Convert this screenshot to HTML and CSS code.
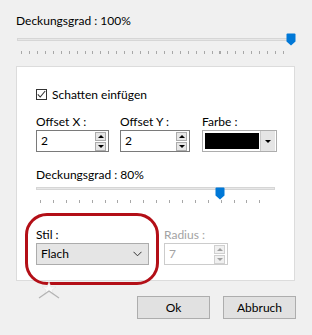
FILE: index.html
```html
<!DOCTYPE html>
<html>
<head>
<meta charset="utf-8">
<link rel="stylesheet" href="styles.css">
</head>
<body>
<div class="dialog">
  <div class="label top-label">Deckungsgrad : 100%</div>
  <div class="slider slider-top">
    <div class="track"></div>
    <div class="ticks ticks-top"></div>
    <svg class="thumb thumb-top" width="10" height="13" viewBox="0 0 10 13"><path d="M0.5 1.5 Q0.5 0.5 1.5 0.5 H8.5 Q9.5 0.5 9.5 1.5 V8.5 L5 12.5 L0.5 8.5 Z" fill="#0078d7"/></svg>
  </div>

  <div class="panel">
    <label class="check-row">
      <span class="checkbox"><svg width="11" height="11" viewBox="0 0 11 11"><path d="M1.8 5.4 L4.2 8 L9.2 2" fill="none" stroke="#333" stroke-width="1.1"/></svg></span>
      <span>Schatten einfügen</span>
    </label>

    <div class="fields">
      <div class="field f-x">
        <div class="label">Offset X :</div>
        <div class="spin">
          <span class="val">2</span>
          <span class="spin-btns"><span class="sb up"></span><span class="sb down"></span></span>
        </div>
      </div>
      <div class="field f-y">
        <div class="label">Offset Y :</div>
        <div class="spin">
          <span class="val">2</span>
          <span class="spin-btns"><span class="sb up"></span><span class="sb down"></span></span>
        </div>
      </div>
      <div class="field f-c">
        <div class="label">Farbe :</div>
        <div class="color-combo">
          <span class="swatch"></span>
          <span class="drop"><span class="tri"></span></span>
        </div>
      </div>
    </div>

    <div class="label op-label">Deckungsgrad : 80%</div>
    <div class="slider slider-inner">
      <div class="track"></div>
      <div class="ticks ticks-inner"></div>
      <svg class="thumb thumb-inner" width="10" height="13" viewBox="0 0 10 13"><path d="M0.5 1.5 Q0.5 0.5 1.5 0.5 H8.5 Q9.5 0.5 9.5 1.5 V8.5 L5 12.5 L0.5 8.5 Z" fill="#0078d7"/></svg>
    </div>

    <div class="bottom-row">
      <div class="field f-stil">
        <div class="label">Stil :</div>
        <div class="select">
          <span class="val">Flach</span>
          <svg class="chev" width="9" height="6" viewBox="0 0 9 6"><path d="M0.5 0.8 L4.5 4.8 L8.5 0.8" fill="none" stroke="#333" stroke-width="1"/></svg>
        </div>
      </div>
      <div class="field f-rad">
        <div class="label disabled">Radius :</div>
        <div class="spin spin-disabled">
          <span class="val">7</span>
          <span class="spin-btns"><span class="sb up"></span><span class="sb down"></span></span>
        </div>
      </div>
    </div>
    <div class="highlight"></div>
  </div>

  <div class="footer">
    <svg class="mark" width="30" height="20" viewBox="0 0 30 20"><path d="M11 1 L13 6 L18 6 L14 9 L15.5 14 L11 11 L6.5 14 L8 9 L4 6 L9 6 Z" fill="#fafafa" stroke="#e2e2e2" stroke-width="0.6"/><path d="M1 17 L11 10 L21 17" fill="none" stroke="#b4b4b4" stroke-width="1.3"/></svg>
    <div class="buttons">
      <button class="btn">Ok</button>
      <button class="btn">Abbruch</button>
    </div>
  </div>
</div>
</body>
</html>
```

FILE: styles.css
```css
* { box-sizing: border-box; }
html, body { margin: 0; padding: 0; }
body {
  background: #f0f0f0;
  font-family: Lato, "Noto Sans", sans-serif;
  font-size: 12px;
  color: #000;
  width: 312px;
  height: 335px;
  overflow: hidden;
}
.dialog { display: flex; flex-direction: column; }
.label { line-height: 14px; height: 14px; white-space: nowrap; }
.label.disabled { color: #a3a3a3; }
.top-label { margin: 14px 0 0 16px; }

.slider { position: relative; }
.track {
  height: 3px;
  background: #e7e7e7;
  border: 1px solid #d6d6d6;
  margin-top: 5px;
}
.ticks {
  height: 3px;
  margin-top: 10px;
}
.ticks-top {
  margin-left: 4px;
  margin-right: 4px;
  background: repeating-linear-gradient(to right, #a8a8a8 0, #a8a8a8 1px, transparent 1px, transparent 7.94px);
}
.ticks-inner {
  margin-left: 4px;
  margin-right: 4px;
  background: repeating-linear-gradient(to right, #a8a8a8 0, #a8a8a8 1px, transparent 1px, transparent 12.9px);
}
.thumb { position: absolute; top: 0; }
.slider-top { margin: 5px 0 0 17px; width: 278px; height: 21px; }
.thumb-top { left: 269px; }

.panel {
  position: relative;
  margin: 12px 0 0 16px;
  width: 279px;
  height: 215px;
  background: #fff;
  border: 1px solid #dcdcdc;
  padding: 19px 0 0 19px;
}
.check-row { display: flex; align-items: center; height: 16px; gap: 5px; }
.checkbox {
  width: 11px; height: 11px;
  border: 1px solid #333;
  display: flex;
  margin-left: 0;
}
.checkbox svg { margin: -1px; }

.fields { display: flex; margin-top: 13px; gap: 11px; }
.field { display: flex; flex-direction: column; }
.field .label { height: 15px; }
.f-x { width: 73px; }
.f-y { width: 70px; }
.f-c { width: 75px; margin-left: 1px; }

.spin {
  height: 22px;
  border: 1px solid #7a7a7a;
  background: #fff;
  display: flex;
  align-items: center;
  justify-content: space-between;
  padding: 0 2px 0 4px;
}
.spin .val { line-height: 16px; }
.spin-btns { display: flex; flex-direction: column; gap: 1px; }
.sb {
  width: 11px; height: 9px;
  border: 1px solid #acacac;
  background: #e6e6e6;
  position: relative;
}
.sb::after {
  content: "";
  position: absolute;
  left: 2px;
  width: 0; height: 0;
  border-left: 3px solid transparent;
  border-right: 3px solid transparent;
}
.sb.up::after { top: 2px; border-bottom: 3px solid #000; }
.sb.down::after { top: 2px; border-top: 3px solid #000; }
.spin-disabled { border-color: #cccccc; }
.spin-disabled .val { color: #a3a3a3; }
.spin-disabled .sb { border-color: #d0d0d0; background: #f0f0f0; }
.spin-disabled .sb.up::after { border-bottom-color: #a0a0a0; }
.spin-disabled .sb.down::after { border-top-color: #a0a0a0; }

.color-combo {
  height: 22px;
  border: 1px solid #adadad;
  background: #fff;
  display: flex;
  padding: 2px 1px 2px 2px;
  gap: 1px;
}
.swatch { flex: 1; background: #000; }
.drop {
  width: 15px;
  background: #e5e5e5;
  border-left: 1px solid #c8c8c8;
  display: flex;
  align-items: center;
  justify-content: center;
  margin: -2px 0;
}
.tri {
  width: 0; height: 0;
  border-left: 3px solid transparent;
  border-right: 3px solid transparent;
  border-top: 3px solid #000;
}

.op-label { margin-top: 16px; }
.slider-inner { margin-top: 1px; width: 239px; height: 21px; }
.thumb-inner { left: 179px; }

.bottom-row { display: flex; margin-top: 20px; gap: 15px; }
.f-stil { width: 113px; }
.f-rad { width: 64px; }
.select {
  height: 22px;
  background: #e5e5e5;
  border: 1px solid #acacac;
  display: flex;
  align-items: center;
  justify-content: space-between;
  padding: 0 6px 0 4px;
}
.select .val { line-height: 16px; }
.chev { display: block; }

.highlight {
  position: absolute;
  left: 8px;
  top: 146px;
  width: 134px;
  height: 72px;
  border: 3px solid #b30f17;
  border-radius: 22px;
  pointer-events: none;
}

.footer { position: relative; height: 54px; }
.mark { position: absolute; left: 38px; top: 0; }
.buttons {
  display: flex;
  justify-content: flex-end;
  gap: 13px;
  padding: 15px 16px 0 0;
}
.btn {
  width: 73px;
  height: 23px;
  background: #e1e1e1;
  border: 1px solid #adadad;
  font-family: Lato, "Noto Sans", sans-serif;
  font-size: 12px;
  color: #000;
  padding: 0;
  line-height: 16px;
}
```
